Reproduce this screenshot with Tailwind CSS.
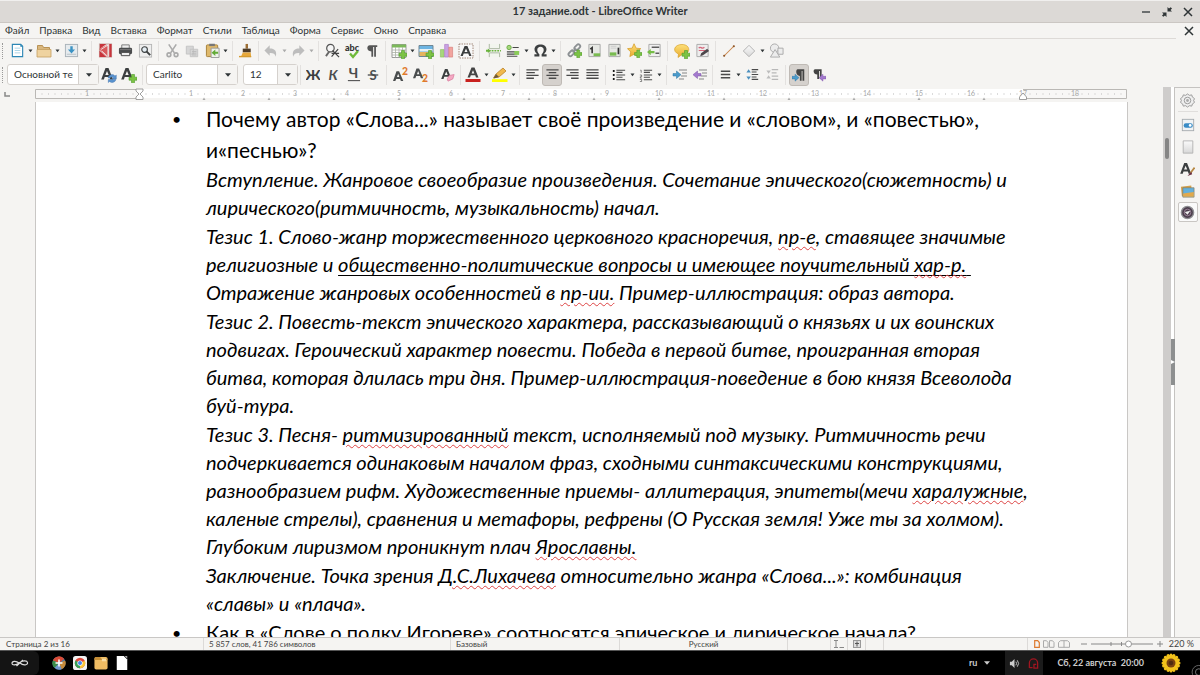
<!DOCTYPE html>
<html lang="ru">
<head>
<meta charset="utf-8">
<meta name="viewport" content="width=device-width, initial-scale=1">
<title>17 задание.odt - LibreOffice Writer</title>
<script src="https://cdn.jsdelivr.net/npm/@tailwindcss/browser@4"></script>
</head>
<body class="flex h-screen flex-col overflow-hidden bg-[#f5f4f2] font-['Lato','Open_Sans',sans-serif] text-[10px] text-[#2e3436]">

<svg class="absolute size-0" xmlns="http://www.w3.org/2000/svg">
  <defs>
    <linearGradient id="gold" x1="0" y1="0" x2="0" y2="1"><stop offset="0" stop-color="#fde07a"/><stop offset="1" stop-color="#e9ab2c"/></linearGradient>
    <linearGradient id="pale" x1="0" y1="0" x2="0" y2="1"><stop offset="0" stop-color="#fafafa"/><stop offset="1" stop-color="#d8d8d8"/></linearGradient>
  </defs>
  <symbol id="plus" viewBox="0 0 16 16"><path d="M10.500 7.500h3v2.700h2.500v3h-2.500v2.600h-3v-2.600H8v-3h2.500z" fill="#7cc344" stroke="#4e9a2c" stroke-width=".6"/></symbol>
  <symbol id="new" viewBox="0 0 16 16"><path d="M2.500 1.500h9l2 2v11h-11z" fill="#fff" stroke="#2d87b5" stroke-width="1.200"/><path d="M5 5.500h6M5 8h6M5 10.500h6" stroke="#a9d3e6"/><path d="M11 1l3 3h-3z" fill="#2d87b5"/></symbol>
  <symbol id="open" viewBox="0 0 16 16"><path d="M1.500 13.500v-11h5l1 2h6v3" fill="#d9b77e" stroke="#b89255"/><path d="M1 6.500h14v7.500H1z" fill="#efd3a0" stroke="#c49f60" stroke-width=".8"/></symbol>
  <symbol id="save" viewBox="0 0 16 16"><rect x="1.500" y="1.500" width="13" height="13" fill="#e6ebee" stroke="#a8b2b8"/><path d="M3 12h10" stroke="#b8c0c4"/><path d="M6.700 3.500h2.600V7h2.500L8 11.300 4.200 7h2.500z" fill="#3c93c4"/></symbol>
  <symbol id="pdf" viewBox="0 0 16 16"><rect x="1.500" y="1" width="13" height="14" fill="#e8d7d5" stroke="#c7a9a6"/><path d="M12 1h2.500v14H12zM2 1h7L2 6z" fill="#c7343b"/><path d="M1.500 6 10 2v13L1.500 7z" fill="#d85a5c"/><path d="M1.500 8L9 15H1.500z" fill="#c7343b"/><path d="M3 7l8-5M4 8.500l6 5.500" stroke="#fff" fill="none" stroke-width=".8"/></symbol>
  <symbol id="print" viewBox="0 0 16 16"><path d="M4 2h8v4H4z" fill="#eee" stroke="#777"/><rect x="1" y="5" width="14" height="7" rx="1.500" fill="#4a4c4d"/><path d="M2 7h12" stroke="#77797a"/><path d="M3.500 10h9v3.500h-9z" fill="#eee" stroke="#444"/></symbol>
  <symbol id="preview" viewBox="0 0 16 16"><rect x="1.500" y="1.500" width="13" height="13.500" fill="#eee" stroke="#b5b5b5"/><circle cx="7" cy="7" r="3" fill="#e5eef4" stroke="#3d4041" stroke-width="1.200"/><path d="M9 9l4 4" stroke="#3d4041" stroke-width="2"/></symbol>
  <symbol id="cut" viewBox="0 0 16 16"><g fill="none" stroke="#aaa" stroke-width="1.700"><path d="M4 1.500l6 9M12 1.500l-6 9"/><circle cx="4.200" cy="12.500" r="2"/><circle cx="11.800" cy="12.500" r="2"/></g></symbol>
  <symbol id="copy" viewBox="0 0 16 16"><path d="M1.500 2.500h8v9h-8zM6 6h8.500v8.500H6z" fill="#d6d6d6" stroke="#c2c2c2"/><path d="M8 8.500h5M8 10.500h5M8 12.500h5" stroke="#b8b8b8"/></symbol>
  <symbol id="paste" viewBox="0 0 16 16"><rect x="1.500" y="2" width="12" height="12.500" rx="1" fill="#dfb96b" stroke="#a57f36"/><rect x="4.500" y=".8" width="6" height="2.500" fill="#777"/><path d="M6.500 5.500h8.500v10H6.500z" fill="#eef2ea" stroke="#999"/><path d="M14 9.200h-3V7L7 10.500l4 3.300v-2.300h3z" fill="#63ab37"/></symbol>
  <symbol id="brush" viewBox="0 0 16 16"><path d="M7 1h2.600v5H7z" fill="#9c6d33"/><path d="M4 6h8.500v4H4z" fill="#4c3a26"/><path d="M4 10h8.500l.5 5H2z" fill="#e7a83b"/><path d="M0 14.500h13" stroke="#d49a2f" stroke-width="1.500"/></symbol>
  <symbol id="undo" viewBox="0 0 16 16"><path d="M6.500 1.500V5c6 0 8.500 3 7 9.500-1-3.500-3-4.500-7-4.300v3.300L.5 7.500z" fill="#bdbdbd"/></symbol>
  <symbol id="find" viewBox="0 0 16 16"><circle cx="5.800" cy="5.500" r="4" fill="#f5f5f5" stroke="#555" stroke-width="1.300"/><path d="M1 14l3.500-5" stroke="#666" stroke-width="2"/><path d="M7 14.500l7-8M8 8l7 7M7 11h8" stroke="#444" stroke-width="1.300"/></symbol>
  <symbol id="pilcrow" viewBox="0 0 16 16"><path d="M5.500 1.500H14v1.800h-1.500V14.500h-2V3.300H9.300v11.200h-2V8.500C1.500 8.500 1.500 1.500 5.500 1.500z" fill="#555"/></symbol>
  <symbol id="table" viewBox="0 0 16 16"><path d="M1 1.500h14v13H1z" fill="#fff" stroke="#9a9a9a"/><path d="M1 1.500h14v3H1z" fill="#7cb95a"/><path d="M1 7h14M1 9.500h14M1 12h14M4.500 4v10.500M8 4v10.500M11.500 4v10.500" stroke="#aab0a5" stroke-width=".8"/><use href="#plus"/></symbol>
  <symbol id="image" viewBox="0 0 16 16"><path d="M1 2.500h14v11H1z" fill="#6db4e2" stroke="#6f8795"/><path d="M1.500 6h13v2.500h-13z" fill="#e8f1f5"/><path d="M1.500 9h13v4h-13z" fill="#e5b460"/><use href="#plus"/></symbol>
  <symbol id="chart" viewBox="0 0 16 16"><path d="M1.500 7h4v8h-4z" fill="#a7d67c" stroke="#86b85c" stroke-width=".6"/><path d="M6 1.500h4V15H6z" fill="#c9a2e2" stroke="#a66fc2" stroke-width=".6"/><path d="M10.500 4.500h4V15h-4z" fill="#f2a49e" stroke="#d3746e" stroke-width=".6"/></symbol>
  <symbol id="textbox" viewBox="0 0 16 16"><rect x="1" y="1" width="14" height="14" fill="#f8f8f8" stroke="#8b6d5b" stroke-width=".8" stroke-dasharray="1.500 1"/><path d="M6.600 3h2.800L13.500 13h-2.300l-.9-2.500H5.700L4.800 13H2.500zM8 5.500L6.500 9h3z" fill="#3b3e3f"/></symbol>
  <symbol id="pagebreak" viewBox="0 0 16 16"><path d="M3.500 1v5h11V1M3.500 15v-4.500h11V15" fill="#f2f5ee" stroke="#a9b5a0"/><path d="M3 8.200h13" stroke="#69b33c" stroke-width="1.500" stroke-dasharray="2 1"/><path d="M0 7.200h2V5.800l3 2.400-3 2.400V9.200H0z" fill="#69b33c"/></symbol>
  <symbol id="field" viewBox="0 0 16 16"><circle cx="3.500" cy="4" r="2.500" fill="#a5d77c" stroke="#69a942"/><path d="M7.500 4h7M1 9h14M1 11.500h10M1 14h12" stroke="#484848" stroke-width="1.300"/><path d="M9.500 8h5.500v4.500H9.500z" fill="#8acb59"/></symbol>
  <symbol id="omega" viewBox="0 0 16 16"><path d="M1.500 14.500v-2.500h3C-1 7 2 1.500 8 1.500s9 5.500 3.500 10.500h3v2.500H9.200v-2.500C13 8 11.500 4 8 4S3 8 6.800 12v2.500z" fill="#3c3f40"/></symbol>
  <symbol id="link" viewBox="0 0 16 16"><g fill="none" stroke="#8d9194" stroke-width="2"><rect x="7.500" y="2.500" width="7" height="4" rx="2" transform="rotate(-45 11 4.500)"/><rect x="1.200" y="9" width="7" height="4" rx="2" transform="rotate(-45 4.700 11)"/><path d="M6 10l4-4"/></g><use href="#plus"/></symbol>
  <symbol id="footnote" viewBox="0 0 16 16"><path d="M2 1.500h12v13H2z" fill="#e6e8e4" stroke="#a8a8a8"/><path d="M3.500 6.500l2-1.500v6" fill="none" stroke="#333" stroke-width="1.700"/><path d="M7 11h7v3H7z" fill="#79bb50"/></symbol>
  <symbol id="endnote" viewBox="0 0 16 16"><path d="M2 1.500h12v13H2z" fill="#e6e8e4" stroke="#a8a8a8"/><path d="M12.200 5v7" stroke="#333" stroke-width="1.800"/><path d="M4 3.500h6M4 5.500h6" stroke="#ccc"/><path d="M3 10h7v3.500H3z" fill="#79bb50"/></symbol>
  <symbol id="bookmark" viewBox="0 0 16 16"><path d="M7.500.8l2.200 4.700 5 .5-3.800 3.500 1 5-4.400-2.500L3 14.500l1-5L.5 6l5-.5z" fill="url(#gold)" stroke="#d79b22" stroke-width=".8"/><use href="#plus"/></symbol>
  <symbol id="crossref" viewBox="0 0 16 16"><path d="M2 1.500h12v13H2z" fill="#f0f0f0" stroke="#a8a8a8"/><path d="M5 4.500h8M9 11h4" stroke="#5c5c5c" stroke-width="1.500"/><path d="M0 9.500l4-3v2h4v2.500H4v2z" fill="#75bd46"/></symbol>
  <symbol id="comment" viewBox="0 0 16 16"><path d="M8 1.500c9 0 9 10 0 10l-4 3 .5-3.500C-2 8.500 0 1.500 8 1.500z" fill="url(#gold)" stroke="#d9a22b" stroke-width=".7"/><use href="#plus"/></symbol>
  <symbol id="track" viewBox="0 0 16 16"><path d="M2 1.500h12v13H2z" fill="#ededed" stroke="#aaa"/><path d="M4 5.500c2-3 3 2 6-1M4 8h7" stroke="#d6687b" fill="none" stroke-width="1.300"/><path d="M5.500 14l1-3L13 6l2 2.500-6.500 4.500z" fill="#4d474b"/></symbol>
  <symbol id="line" viewBox="0 0 16 16"><path d="M2 14L14 2" stroke="#c98348" stroke-width="1.200"/><circle cx="2.500" cy="13.500" r="1.200" fill="#8d5426"/><circle cx="13.500" cy="2.500" r="1.200" fill="#8d5426"/></symbol>
  <symbol id="diamond" viewBox="0 0 16 16"><path d="M8 1.500L14.500 8 8 14.500 1.500 8z" fill="url(#pale)" stroke="#aaa"/></symbol>
  <symbol id="shapes" viewBox="0 0 16 16"><g fill="#ececec" stroke="#aaa"><circle cx="6" cy="5.500" r="4.500"/><path d="M9.500 5.500H15v6.500H9.500z"/><path d="M6.500 7l5 8h-10z"/></g></symbol>
  <symbol id="bigA" viewBox="0 0 16 16"><path d="M4.500 1h3L12 12.500H9.200L8.400 10H3.700l-.8 2.500H.2zM6 4L4.300 8h3.400z" fill="#3c3f40"/></symbol>
  <symbol id="styleupd" viewBox="0 0 16 16"><use href="#bigA"/><path d="M7 11a4 4 0 0 1 7-2l1.300-1v4h-4l1.200-1.200A2.500 2.500 0 0 0 9 11zM15 12.500a4 4 0 0 1-6.500 2L7.300 15.500V12.500z" fill="#5a93cf" stroke="#346ba7" stroke-width=".4"/></symbol>
  <symbol id="stylenew" viewBox="0 0 16 16"><use href="#bigA"/><use href="#plus"/></symbol>
  <symbol id="clearfmt" viewBox="0 0 16 16"><use href="#bigA"/><path d="M9.500 8.500l5.500-1-1.500 5-5.500 2.500-1-2.500z" fill="#f5a9c3" stroke="#d77a9c" stroke-width=".8"/></symbol>
  <symbol id="fontcolor" viewBox="0 0 16 16"><path d="M6.500.5h3L13.500 10.500H11L10.200 8.300H5.800L5 10.500H2.500zM8 3.200L6.600 6.500h2.800z" fill="#444"/><path d="M.5 12h15v3H.5z" fill="#c9211e"/></symbol>
  <symbol id="hilite" viewBox="0 0 16 16"><path d="M0 12.200h15.500V15H0z" fill="#ff0"/><path d="M1.500 11l2.500-4 7-6 3 3-7 6z" fill="#f0b94e" stroke="#bb8127" stroke-width=".8"/><path d="M1.500 11.500L4 7l3 3z" fill="#6c5a3b"/></symbol>
  <symbol id="left" viewBox="0 0 16 16"><path d="M1.500 3h13M1.500 6h9M1.500 9h13M1.500 12h8" stroke="#4a4a4a" stroke-width="1.400"/></symbol>
  <symbol id="center" viewBox="0 0 16 16"><path d="M1.500 3h13M4 6h8M1.500 9h13M4 12h8" stroke="#4a4a4a" stroke-width="1.400"/></symbol>
  <symbol id="right" viewBox="0 0 16 16"><path d="M1.500 3h13M5.500 6h9M1.500 9h13M6.500 12h8" stroke="#4a4a4a" stroke-width="1.400"/></symbol>
  <symbol id="justify" viewBox="0 0 16 16"><path d="M1.500 3h13M1.500 6h13M1.500 9h13M1.500 12h13" stroke="#4a4a4a" stroke-width="1.400"/></symbol>
  <symbol id="bullets" viewBox="0 0 16 16"><path d="M5 2.500h10M5 5h7M5 8h10M5 10.500h7M5 13.500h10" stroke="#4a4a4a" stroke-width="1.200"/><circle cx="2" cy="3.500" r="1.200"/><circle cx="2" cy="8" r="1.200"/><circle cx="2" cy="12.500" r="1.200"/></symbol>
  <symbol id="numbers" viewBox="0 0 16 16"><path d="M5.500 2.500H15M5.500 5h7M5.500 8H15M5.500 10.500h7M5.500 13.500H15" stroke="#4a4a4a" stroke-width="1.200"/><path d="M1.500 2.500h1v3M1 8h2v2H1.500v1.500H3M1 13h2v2.500H1" fill="none" stroke="#555" stroke-width=".8"/></symbol>
  <symbol id="indent" viewBox="0 0 16 16"><path d="M7 3h8M10 6h5M9 9h6M7 12h5" stroke="#858585" stroke-width="1.200"/><path d="M1 6.500h3.500V4L9 7.700l-4.500 3.800V9H1z" fill="#4b9bcb" stroke="#2b76a5" stroke-width=".5"/></symbol>
  <symbol id="outdent" viewBox="0 0 16 16"><path d="M7 3h8M10 6h5M9 9h6M7 12h5" stroke="#858585" stroke-width="1.200"/><path d="M9 6.500H5.500V4L1 7.700l4.500 3.800V9H9z" fill="#a379ce" stroke="#7e52ab" stroke-width=".5"/></symbol>
  <symbol id="spacing" viewBox="0 0 16 16"><path d="M3 4.500h10M3 8h10M3 11.500h10" stroke="#4a4a4a" stroke-width="1.700"/></symbol>
  <symbol id="paraup" viewBox="0 0 16 16"><path d="M7 2h8M7 5h6M7 8h8M7 11h6M7 14h8" stroke="#4a4a4a" stroke-width="1.300"/><path d="M3.200 1.500L6 5.500H.5zM3.200 14.500L6 10.500H.5z" fill="#4b8fbd"/></symbol>
  <symbol id="paradown" viewBox="0 0 16 16"><path d="M7 2h8M7 6h6M7 10h8M7 14h8" stroke="#b8b8b8" stroke-width="1.300"/><path d="M3.200 7L6 3H.5zM3.200 9L6 13H.5z" fill="#bdbdbd"/></symbol>
  <symbol id="ltr" viewBox="0 0 16 16"><path d="M6.500 1.500H14v13h-2V3.500h-1v11H9V9C4 9 4 1.500 6.500 1.500z" fill="#444"/><path d="M0 9.500h3.500V7L8 11l-4.500 4v-2.500H0z" fill="#4b9bcb" stroke="#2b76a5" stroke-width=".5"/></symbol>
  <symbol id="rtl" viewBox="0 0 16 16"><path d="M3.500 1.500H11v11H9V3.500H8v9H6V7.500C1 7.500 1 1.500 3.500 1.500z" fill="#444"/><path d="M16 9.500h-3.500V7L8 11l4.500 4v-2.500H16z" fill="#a379ce" stroke="#7e52ab" stroke-width=".5"/></symbol>
  <symbol id="tri" viewBox="0 0 7 16"><path d="M1.500 6.500h4L3.500 9.200z" fill="currentColor"/></symbol>
  <symbol id="drop" viewBox="0 0 8 8"><path d="M1 2.200h6L4 5.800z" fill="currentColor"/></symbol>
</svg>

<header class="relative flex h-[23px] shrink-0 items-center border-t border-b border-t-[#f0efee] border-b-[#cbc7c3] bg-[#dcd9d6]">
  <h1 class="flex-1 text-center text-[11px] font-bold">17 задание.odt - LibreOffice Writer</h1>
  <div class="absolute right-[2px] flex gap-px text-[#2e3436]">
    <button aria-label="Свернуть" class="flex h-4 w-5 items-center justify-center"><svg class="size-3" viewBox="0 0 12 12"><path d="M2 6h8" stroke="currentColor" stroke-width="1.300"/></svg></button>
    <button aria-label="Восстановить" class="flex h-4 w-5 items-center justify-center"><svg class="size-3" viewBox="0 0 12 12"><path d="M6.500 1v4.500H11L9.500 4 11 2.500 9.700 1.200 8 2.600zM5.500 11V6.500H1L2.500 8 1 9.500l1.300 1.300L4 9.400z" fill="currentColor"/></svg></button>
    <button aria-label="Закрыть" class="flex h-4 w-5 items-center justify-center"><svg class="size-3" viewBox="0 0 12 12"><path d="M2 2l8 8M10 2l-8 8" stroke="currentColor" stroke-width="1.500"/></svg></button>
  </div>
</header>

<nav class="flex h-[15px] shrink-0 items-center justify-between pr-[5px] pl-[5px]">
  <div class="flex gap-[10px]">
    <button>Файл</button><button>Правка</button><button>Вид</button><button>Вставка</button><button>Формат</button><button>Стили</button><button>Таблица</button><button>Форма</button><button>Сервис</button><button>Окно</button><button>Справка</button>
  </div>
  <button aria-label="Закрыть документ"><svg class="size-3" viewBox="0 0 12 12"><path d="M2 2l8 8M10 2l-8 8" stroke="currentColor" stroke-width="1.500"/></svg></button>
</nav>

<div role="toolbar" aria-label="Стандартная" class="mr-6 flex h-6 shrink-0 items-center border-t border-[#dddad7]">
  <i class="mr-1 ml-[2px] h-4 w-px border-l border-dotted border-[#999]"></i>
  <button aria-label="Создать" class="flex w-5 justify-center"><svg class="size-[15px]"><use href="#new"/></svg></button><button aria-label="Создать: варианты"><svg class="h-4 w-[7px]"><use href="#tri"/></svg></button>
  <button aria-label="Открыть" class="flex w-5 justify-center"><svg class="size-4"><use href="#open"/></svg></button><button aria-label="Недавние"><svg class="h-4 w-[7px]"><use href="#tri"/></svg></button>
  <button aria-label="Сохранить" class="flex w-5 justify-center"><svg class="size-[15px]"><use href="#save"/></svg></button><button aria-label="Сохранить: варианты"><svg class="h-4 w-[7px]"><use href="#tri"/></svg></button>
  <i class="mx-[3px] h-5 w-px bg-[#e3e1df]"></i>
  <button aria-label="Экспорт в PDF" class="flex w-5 justify-center"><svg class="size-[15px]"><use href="#pdf"/></svg></button>
  <button aria-label="Печать" class="flex w-5 justify-center"><svg class="size-[15px]"><use href="#print"/></svg></button>
  <button aria-label="Предпросмотр" class="flex w-5 justify-center"><svg class="size-[15px]"><use href="#preview"/></svg></button>
  <i class="mx-[3px] h-5 w-px bg-[#e3e1df]"></i>
  <button aria-label="Вырезать" class="flex w-5 justify-center"><svg class="size-[15px]"><use href="#cut"/></svg></button>
  <button aria-label="Копировать" class="flex w-5 justify-center"><svg class="size-[14px]"><use href="#copy"/></svg></button>
  <button aria-label="Вставить" class="flex w-5 justify-center"><svg class="size-[15px]"><use href="#paste"/></svg></button><button aria-label="Вставить: варианты"><svg class="h-4 w-[7px]"><use href="#tri"/></svg></button>
  <i class="mx-[3px] h-5 w-px bg-[#e3e1df]"></i>
  <button aria-label="Клонировать" class="flex w-5 justify-center"><svg class="size-[15px]"><use href="#brush"/></svg></button>
  <i class="mx-[2px] h-5 w-px bg-[#e3e1df]"></i>
  <button aria-label="Отменить" class="flex w-5 justify-center"><svg class="size-[14px]"><use href="#undo"/></svg></button><button aria-label="Отменить: список" class="text-[#aaa]"><svg class="h-4 w-[7px]"><use href="#tri"/></svg></button>
  <button aria-label="Вернуть" class="flex w-5 justify-center"><svg class="size-[14px] -scale-x-100"><use href="#undo"/></svg></button><button aria-label="Вернуть: список" class="text-[#aaa]"><svg class="h-4 w-[7px]"><use href="#tri"/></svg></button>
  <i class="mx-[3px] h-5 w-px bg-[#e3e1df]"></i>
  <button aria-label="Найти и заменить" class="flex w-5 justify-center"><svg class="size-[15px]"><use href="#find"/></svg></button>
  <button aria-label="Орфография" class="flex w-5 justify-center"><svg class="size-4" viewBox="0 0 16 16"><text x="8" y="8" font-size="9" font-weight="900" text-anchor="middle" fill="#333">abc</text><path d="M6 10.500l3 3.500 5-6" fill="none" stroke="#6fba3a" stroke-width="2.400"/></svg></button>
  <button aria-label="Непечатаемые символы" class="flex w-5 justify-center"><svg class="size-[14px]"><use href="#pilcrow"/></svg></button>
  <i class="mx-[3px] h-5 w-px bg-[#e3e1df]"></i>
  <button aria-label="Таблица" class="flex w-5 justify-center"><svg class="size-4"><use href="#table"/></svg></button><button aria-label="Таблица: размер"><svg class="h-4 w-[7px]"><use href="#tri"/></svg></button>
  <button aria-label="Изображение" class="flex w-5 justify-center"><svg class="size-4"><use href="#image"/></svg></button>
  <button aria-label="Диаграмма" class="flex w-5 justify-center"><svg class="size-[15px]"><use href="#chart"/></svg></button>
  <button aria-label="Текстовый блок" class="flex w-5 justify-center"><svg class="size-4"><use href="#textbox"/></svg></button>
  <i class="mx-[3px] h-5 w-px bg-[#e3e1df]"></i>
  <button aria-label="Разрыв страницы" class="flex w-5 justify-center"><svg class="size-[15px]"><use href="#pagebreak"/></svg></button>
  <button aria-label="Поле" class="flex w-5 justify-center"><svg class="size-[14px]"><use href="#field"/></svg></button><button aria-label="Поле: варианты"><svg class="h-4 w-[7px]"><use href="#tri"/></svg></button>
  <button aria-label="Специальный символ" class="flex w-5 justify-center"><svg class="size-[15px]"><use href="#omega"/></svg></button><button aria-label="Символы"><svg class="h-4 w-[7px]"><use href="#tri"/></svg></button>
  <i class="mx-[3px] h-5 w-px bg-[#e3e1df]"></i>
  <button aria-label="Гиперссылка" class="flex w-5 justify-center"><svg class="size-[15px]"><use href="#link"/></svg></button>
  <button aria-label="Сноска" class="flex w-5 justify-center"><svg class="size-[15px]"><use href="#footnote"/></svg></button>
  <button aria-label="Концевая сноска" class="flex w-5 justify-center"><svg class="size-[15px]"><use href="#endnote"/></svg></button>
  <button aria-label="Закладка" class="flex w-5 justify-center"><svg class="size-[15px]"><use href="#bookmark"/></svg></button>
  <button aria-label="Перекрёстная ссылка" class="flex w-5 justify-center"><svg class="size-[15px]"><use href="#crossref"/></svg></button>
  <i class="mr-1 ml-[3px] h-5 w-px bg-[#e3e1df]"></i>
  <button aria-label="Комментарий" class="flex w-5 justify-center"><svg class="size-4"><use href="#comment"/></svg></button>
  <button aria-label="Исправления" class="flex w-5 justify-center"><svg class="size-[15px]"><use href="#track"/></svg></button>
  <i class="mx-[3px] h-5 w-px bg-[#e3e1df]"></i>
  <button aria-label="Линия" class="flex w-5 justify-center"><svg class="size-[14px]"><use href="#line"/></svg></button>
  <button aria-label="Фигуры" class="flex w-5 justify-center"><svg class="size-[14px]"><use href="#diamond"/></svg></button><button aria-label="Фигуры: варианты"><svg class="h-4 w-[7px]"><use href="#tri"/></svg></button>
  <button aria-label="Рисование" class="flex w-5 justify-center"><svg class="size-[15px]"><use href="#shapes"/></svg></button>
</div>

<div role="toolbar" aria-label="Форматирование" class="flex h-[25px] shrink-0 items-center">
  <i class="mr-1 ml-[2px] h-4 w-px border-l border-dotted border-[#999]"></i>
  <div class="relative h-[21px] w-[92px]">
    <select aria-label="Стиль абзаца" class="h-full w-full appearance-none overflow-hidden rounded-[3px] border border-[#d5d1cd] bg-white pr-[25px] pl-[6px]"><option>Основной текст</option></select>
    <span class="pointer-events-none absolute inset-y-px right-px flex w-5 items-center justify-center border-l border-[#d5d1cd] bg-[#f5f4f2]"><svg class="size-2"><use href="#drop"/></svg></span>
  </div>
  <button aria-label="Обновить стиль" class="flex w-5 justify-center"><svg class="size-4"><use href="#styleupd"/></svg></button>
  <button aria-label="Создать стиль" class="flex w-5 justify-center"><svg class="size-4"><use href="#stylenew"/></svg></button>
  <i class="mx-[3px] h-5 w-px bg-[#e3e1df]"></i>
  <div class="relative h-[21px] w-[92px]">
    <select aria-label="Шрифт" class="h-full w-full appearance-none rounded-[3px] border border-[#d5d1cd] bg-white pr-[25px] pl-[6px]"><option>Carlito</option></select>
    <span class="pointer-events-none absolute inset-y-px right-px flex w-5 items-center justify-center border-l border-[#d5d1cd] bg-[#f5f4f2]"><svg class="size-2"><use href="#drop"/></svg></span>
  </div>
  <div class="relative ml-[5px] h-[21px] w-[55px]">
    <select aria-label="Размер шрифта" class="h-full w-full appearance-none rounded-[3px] border border-[#d5d1cd] bg-white pr-6 pl-[6px]"><option>12</option></select>
    <span class="pointer-events-none absolute inset-y-px right-px flex w-5 items-center justify-center border-l border-[#d5d1cd] bg-[#f5f4f2]"><svg class="size-2"><use href="#drop"/></svg></span>
  </div>
  <i class="mx-[2px] h-5 w-px bg-[#e3e1df]"></i>
  <button aria-label="Полужирный" class="flex w-5 justify-center"><svg class="size-[14px]" viewBox="0 0 16 16"><text x="8" y="13.500" font-size="16" font-weight="900" text-anchor="middle" fill="#3c3f40">Ж</text></svg></button>
  <button aria-label="Курсив" class="flex w-5 justify-center"><svg class="size-[14px]" viewBox="0 0 16 16"><text x="8" y="13.500" font-size="16" font-style="italic" font-weight="700" text-anchor="middle" fill="#4a4d4e">К</text></svg></button>
  <button aria-label="Подчёркнутый" class="flex w-5 justify-center"><svg class="size-[15px]" viewBox="0 0 16 16"><text x="8" y="12" font-size="15" font-weight="700" text-anchor="middle" fill="#4a4d4e">Ч</text><path d="M2 14.500h13" stroke="#555" stroke-width="1.200"/></svg></button>
  <button aria-label="Зачёркнутый" class="flex w-5 justify-center"><svg class="size-[14px]" viewBox="0 0 16 16"><text x="8" y="13.500" font-size="15" font-weight="700" text-anchor="middle" fill="#4a4d4e">S</text><path d="M2 8h12" stroke="#4a4d4e" stroke-width="1.500"/></svg></button>
  <i class="mx-[3px] h-5 w-px bg-[#e3e1df]"></i>
  <button aria-label="Верхний индекс" class="flex w-5 justify-center"><svg class="size-[15px]" viewBox="0 0 16 16"><path d="M3.700 4.500h2.800L11 15H8.400l-.9-2.300H3.400L2.500 15H0zM5.500 7.200L4.200 10.700h2.600z" fill="#4a4d4e"/><text x="9.500" y="8" font-size="11" font-weight="900" fill="#e07a2c">2</text></svg></button>
  <button aria-label="Нижний индекс" class="flex w-5 justify-center"><svg class="size-[15px]" viewBox="0 0 16 16"><path d="M3.700 1.500h2.800L11 12H8.400l-.9-2.300H3.400L2.500 12H0zM5.500 4.200L4.200 7.700h2.600z" fill="#4a4d4e"/><text x="9.500" y="15.500" font-size="11" font-weight="900" fill="#e07a2c">2</text></svg></button>
  <i class="mr-1 ml-[3px] h-5 w-px bg-[#e3e1df]"></i>
  <button aria-label="Очистить форматирование" class="flex w-5 justify-center"><svg class="size-[14px]"><use href="#clearfmt"/></svg></button>
  <i class="mx-[2px] h-5 w-px bg-[#e3e1df]"></i>
  <button aria-label="Цвет шрифта" class="flex w-5 justify-center"><svg class="size-4"><use href="#fontcolor"/></svg></button><button aria-label="Выбор цвета шрифта"><svg class="h-4 w-[7px]"><use href="#tri"/></svg></button>
  <button aria-label="Цвет выделения" class="flex w-5 justify-center"><svg class="size-4"><use href="#hilite"/></svg></button><button aria-label="Выбор цвета выделения"><svg class="h-4 w-[7px]"><use href="#tri"/></svg></button>
  <i class="mx-[2px] h-5 w-px bg-[#e3e1df]"></i>
  <button aria-label="По левому краю" class="flex w-5 justify-center"><svg class="size-[15px]"><use href="#left"/></svg></button>
  <button aria-label="По центру" aria-pressed="true" class="flex h-[22px] w-5 items-center justify-center rounded-[3px] border border-[#bfbab5] bg-[#d5d1cd]"><svg class="size-[15px] shrink-0"><use href="#center"/></svg></button>
  <button aria-label="По правому краю" class="flex w-5 justify-center"><svg class="size-[15px]"><use href="#right"/></svg></button>
  <button aria-label="По ширине" class="flex w-5 justify-center"><svg class="size-[15px]"><use href="#justify"/></svg></button>
  <i class="mx-[3px] h-5 w-px bg-[#e3e1df]"></i>
  <button aria-label="Маркированный список" class="flex w-5 justify-center"><svg class="size-[14px]"><use href="#bullets"/></svg></button><button aria-label="Маркеры"><svg class="h-4 w-[7px]"><use href="#tri"/></svg></button>
  <button aria-label="Нумерованный список" class="flex w-5 justify-center"><svg class="size-[14px]"><use href="#numbers"/></svg></button><button aria-label="Нумерация"><svg class="h-4 w-[7px]"><use href="#tri"/></svg></button>
  <i class="mx-[3px] h-5 w-px bg-[#e3e1df]"></i>
  <button aria-label="Увеличить отступ" class="flex w-5 justify-center"><svg class="size-4"><use href="#indent"/></svg></button>
  <button aria-label="Уменьшить отступ" class="flex w-5 justify-center"><svg class="size-4"><use href="#outdent"/></svg></button>
  <i class="mx-[2px] h-5 w-px bg-[#e3e1df]"></i>
  <button aria-label="Межстрочный интервал" class="flex w-5 justify-center"><svg class="size-[15px]"><use href="#spacing"/></svg></button><button aria-label="Выбор интервала"><svg class="h-4 w-[7px]"><use href="#tri"/></svg></button>
  <button aria-label="Увеличить интервал" class="flex w-5 justify-center"><svg class="size-[13px]"><use href="#paraup"/></svg></button>
  <button aria-label="Уменьшить интервал" class="flex w-5 justify-center"><svg class="size-[13px]"><use href="#paradown"/></svg></button>
  <i class="mx-[3px] h-5 w-px bg-[#e3e1df]"></i>
  <button aria-label="Слева направо" aria-pressed="true" class="flex h-[22px] w-5 items-center justify-center rounded-[3px] border border-[#bfbab5] bg-[#d5d1cd]"><svg class="size-[14px] shrink-0"><use href="#ltr"/></svg></button>
  <button aria-label="Справа налево" class="flex w-5 justify-center"><svg class="size-[14px]"><use href="#rtl"/></svg></button>
</div>

<main class="flex min-h-0 flex-1">
  <div class="flex min-w-0 flex-1 flex-col">
    <div class="relative flex h-[15px] shrink-0 justify-center pt-px">
      <svg class="absolute top-[5px] left-1 size-[6px]" viewBox="0 0 6 6"><path d="M1 0v4h5" fill="none" stroke="#888" stroke-width="1.500"/></svg>
      <svg id="ruler" class="h-[14px] w-[1093px] shrink-0" viewBox="0 0 1093 14" font-size="7" fill="#aaa" text-anchor="middle">
        <rect x="104" y="1" width="884" height="9" fill="#fff"/>
        <path d="M104 1.500H.5v9H104M988 1.500h103.500v9H988" fill="#f8f7f6" stroke="#bab8b5"/>
        <path d="M6.500 6H1090" stroke="#d0d0d0" stroke-width="1.500" stroke-dasharray="1 5.500"/>
        <g id="marks"></g>
        <path d="M101 1h7v2l-3 3 3 3v2.500h-7V9l3-3-3-3zM988 5l3.500 4v2.500h-7V9z" fill="#fff" stroke="#888" stroke-width=".8"/>
      </svg>
    </div>
    <div class="flex min-h-0 flex-1 justify-center overflow-hidden">
      <article class="h-full w-[1093px] shrink-0 overflow-hidden border-x border-[#c9c7c5] bg-white pt-px pl-[136px] whitespace-nowrap text-black">
        <ul class="text-[21px] leading-[31px]">
          <li class="flex"><span class="w-[34px] shrink-0 text-[16px]">•</span><p>Почему автор «Слова...» называет своё произведение и «словом», и «повестью»,<br>и«песнью»?</p></li>
        </ul>
        <div class="ml-[34px] flex flex-col gap-px text-[20px] leading-[28px] italic">
          <p>Вступление. Жанровое своеобразие произведения. Сочетание эпического(сюжетность) и<br>лирического(ритмичность, музыкальность) начал.</p>
          <p>Тезис 1. Слово-жанр торжественного церковного красноречия, <span class="underline decoration-[#d44] decoration-wavy decoration-1 underline-offset-2">пр-е</span>, ставящее значимые<br>религиозные и <u class="decoration-1 underline-offset-[3px] [text-decoration-skip-ink:none]">общественно-политические вопросы и имеющее поучительный <span class="underline decoration-[#d44] decoration-wavy decoration-1 underline-offset-2">хар-р.</span>&nbsp;</u><br>Отражение жанровых особенностей в <span class="underline decoration-[#d44] decoration-wavy decoration-1 underline-offset-2">пр-ии.</span> Пример-иллюстрация: образ автора.</p>
          <p>Тезис 2. Повесть-текст эпического характера, рассказывающий о князьях и их воинских<br>подвигах. Героический характер повести. Победа в первой битве, проигранная вторая<br>битва, которая длилась три дня. Пример-иллюстрация-поведение в бою князя Всеволода<br>буй-тура.</p>
          <p>Тезис 3. Песня- <span class="underline decoration-[#d44] decoration-wavy decoration-1 underline-offset-2">ритмизированный</span> текст, исполняемый под музыку. Ритмичность речи<br>подчеркивается одинаковым началом фраз, сходными синтаксическими конструкциями,<br>разнообразием рифм. Художественные приемы- аллитерация, эпитеты(мечи <span class="underline decoration-[#d44] decoration-wavy decoration-1 underline-offset-2">харалужные</span>,<br>каленые стрелы), сравнения и метафоры, рефрены (О Русская земля! Уже ты за холмом).<br>Глубоким лиризмом проникнут плач <span class="underline decoration-[#d44] decoration-wavy decoration-1 underline-offset-2">Ярославны.</span></p>
          <p>Заключение. Точка зрения <span class="underline decoration-[#d44] decoration-wavy decoration-1 underline-offset-2">Д.С.Лихачева</span> относительно жанра «Слова...»: комбинация<br>«славы» и «плача».</p>
        </div>
        <ul class="text-[20px] leading-[31px]">
          <li class="flex"><span class="w-[34px] shrink-0 text-[16px]">•</span><p>Как в «Слове о полку Игореве» соотносятся эпическое и лирическое начала?</p></li>
        </ul>
      </article>
    </div>
  </div>
  <div class="w-2 shrink-0 bg-[#cecccb] pt-[51px]"><div class="mx-auto h-[21px] w-1 rounded-xs bg-[#858585]"></div></div>
  <div class="flex w-1 shrink-0 items-center border-r border-[#c5c3c1] bg-white"><button aria-label="Скрыть панель" class="flex h-[46px] w-1 items-center bg-[#8d8f90]"><svg class="size-1" viewBox="0 0 4 4"><path d="M0 0l4 2-4 2z" fill="#fff"/></svg></button></div>
  <aside class="flex w-[25px] shrink-0 flex-col items-center border-t border-[#c5c3c1] pt-[1px]">
    <button aria-label="Настройки боковой панели" class="flex h-[22px] w-5 items-center justify-center"><svg class="size-[15px]" viewBox="0 0 16 16"><path d="M8 1l2 1.500 2.500-.5.700 2.300L15.500 6l-1 2 1 2-2.300 1.700-.7 2.300-2.500-.5L8 15l-2-1.500-2.500.5-.7-2.300L.5 10l1-2-1-2 2.300-1.700L3.500 2l2.500.5z" fill="#eee" stroke="#999"/><circle cx="8" cy="8" r="3.500" fill="none" stroke="#999"/><circle cx="8" cy="8" r="1.500" fill="#aaa"/></svg></button>
    <i class="mb-[2px] h-px w-5 bg-[#e0dedc]"></i>
    <button aria-label="Свойства" class="flex h-[22px] w-5 items-center justify-center"><svg class="size-[14px]" viewBox="0 0 16 16"><rect x="1.500" y="1.500" width="13" height="13" fill="#f0f3f5" stroke="#a3a9ad"/><rect x="3" y="6" width="10.500" height="5" rx="2.500" fill="#3a8cc6"/><circle cx="10.500" cy="8.500" r="1.600" fill="#fff"/></svg></button>
    <button aria-label="Страница" class="flex h-[22px] w-5 items-center justify-center"><svg class="size-[14px]" viewBox="0 0 16 16"><path d="M2.500 1h11v14h-11z" fill="url(#pale)" stroke="#b0b0b0"/></svg></button>
    <button aria-label="Стили" class="flex h-[22px] w-5 items-center justify-center"><svg class="size-[15px]" viewBox="0 0 16 16"><use href="#bigA"/><path d="M15.500 6L11 12" stroke="#b88945" stroke-width="1.800"/><path d="M12 10.500L8 15l5-2z" fill="#6b3040"/></svg></button>
    <button aria-label="Галерея" class="flex h-[22px] w-5 items-center justify-center"><svg class="size-[15px]" viewBox="0 0 16 16"><path d="M1 3l11-1.500L13 12 2 13z" fill="#d3a04b"/><path d="M3 4h12v10H3z" fill="#63b0dd" stroke="#87795c" stroke-width=".7"/><path d="M3.300 10l11.400-1.500v5.200H3.300z" fill="#e2a94c"/></svg></button>
    <button aria-label="Навигатор" class="flex h-5 w-5 items-center justify-center rounded-[2px] border border-[#c9c6c3] bg-[#fafafa]"><svg class="size-[15px] shrink-0" viewBox="0 0 16 16"><circle cx="8" cy="8" r="6.500" fill="#4c3e4d" stroke="#8f8f93" stroke-width="1.500"/><circle cx="8" cy="8" r="3.500" fill="none" stroke="#9b8499"/><path d="M5 7.500l6-1.500-3 4.500z" fill="#eee"/></svg></button>
  </aside>
</main>

<footer class="flex h-[13px] shrink-0 items-center border-t border-[#c9c7c5] text-[8px] leading-[12px] whitespace-nowrap text-[#444]">
  <span class="w-[203px] pl-[6px]">Страница 2 из 16</span>
  <span class="w-[247px] border-l border-[#dcdad8] pl-[5px]">5 857 слов, 41 786 символов</span>
  <span class="w-[169px] border-l border-[#dcdad8] pl-[5px]">Базовый</span>
  <span class="w-[168px] border-l border-[#dcdad8] text-center">Русский</span>
  <span class="h-3 w-[43px] border-l border-[#dcdad8]"></span>
  <span class="flex h-3 w-[18px] items-center justify-center border-x border-[#dcdad8]"><svg class="h-2 w-[10px]" viewBox="0 0 10 8"><path d="M0 .5h4M2 .5v7M0 7.500h4M5.500 7.500H10" stroke="#888" fill="none"/></svg></span>
  <span class="flex h-3 w-[18px] items-center justify-center border-r border-[#dcdad8]"><svg class="size-2" viewBox="0 0 8 8"><rect x=".5" y=".5" width="7" height="7" fill="#ddd" stroke="#999"/><path d="M4 1.500v5M2 3.500h4" stroke="#555"/></svg></span>
  <span class="h-3 w-[18px] border-r border-[#dcdad8]"></span>
  <span class="h-3 flex-1"></span>
  <span class="flex h-3 items-center gap-[3px] border-l border-[#dcdad8] pl-[6px]">
    <button aria-label="Одна страница"><svg class="h-2 w-[6px]" viewBox="0 0 6 8"><path d="M.7.700h3L5.300 2.500v4.800H.7z" fill="none" stroke="#dd7a2f" stroke-width="1.200"/></svg></button>
    <button aria-label="Несколько страниц"><svg class="h-2 w-3" viewBox="0 0 12 8"><path d="M.5.700h3L5 2.500v4.800H.5zM6.500.700h3L11 2.500v4.800H6.500z" fill="none" stroke="#aaa"/></svg></button>
    <button aria-label="Книга"><svg class="h-2 w-3" viewBox="0 0 12 8"><path d="M6 .7H2.500L.5 2.500v4.800h11V2.500L9.500.7zM6 .7v6.600" fill="none" stroke="#aaa"/></svg></button>
  </span>
  <span class="ml-[11px] flex items-center gap-1">
    <button aria-label="Уменьшить масштаб"><svg class="h-2 w-[6px]" viewBox="0 0 6 8"><path d="M0 4h6" stroke="#888"/></svg></button>
    <svg role="img" aria-label="Масштаб" class="h-2 w-[62px]" viewBox="0 0 62 8"><path d="M0 4h62M20 2v4M30.500 2v4" stroke="#888"/><circle cx="37.500" cy="4" r="3" fill="#fff" stroke="#999"/></svg>
    <button aria-label="Увеличить масштаб"><svg class="h-2 w-[6px]" viewBox="0 0 6 8"><path d="M0 4h6M3 1v6" stroke="#888"/></svg></button>
  </span>
  <span class="w-[37px] pr-[6px] text-right text-[9px]">220 %</span>
</footer>

<div class="flex h-[25px] shrink-0 items-center border-t border-[#555] bg-black text-[9px] font-bold text-[#ccc]">
  <button aria-label="Меню приложений" class="flex h-full w-[39px] items-center justify-center rounded-r-md bg-[#141414]"><svg class="h-2 w-[18px]" viewBox="0 0 18 8"><path d="M5.500 7L12 1M8 4C5 1.500 1 2 1 4.300s4 2.200 7-.3 8-3 8.500-.5-4 3.500-7.500.5" fill="none" stroke="#ddd" stroke-width="1.200"/></svg></button>
  <div class="ml-[13px] flex items-center gap-[7px]">
    <button aria-label="Помощник"><svg class="size-[14px]" viewBox="0 0 16 16"><circle cx="8" cy="8" r="7.500" fill="#4c7fa8"/><path d="M8 8L1 5A7.500 7.500 0 0 1 14 3.500z" fill="#da4b36"/><path d="M8 8l7-3a7.500 7.500 0 0 1-4 10z" fill="#c48a3b"/><path d="M8 8l3 7a7.500 7.500 0 0 1-8-1.500z" fill="#7298ce"/><path d="M8 8L1 5a7.500 7.500 0 0 0 2 8.500z" fill="#3c8c49"/><path d="M8 4v8M4 8h8" stroke="#fff" stroke-width="1.800"/></svg></button>
    <button aria-label="Chrome"><svg class="size-[14px]" viewBox="0 0 16 16"><rect width="16" height="16" rx="3" fill="#f3f3f3"/><circle cx="8" cy="8" r="6" fill="#e0483a"/><path d="M8 8L2.800 5A6 6 0 0 0 8 14l2-4z" fill="#34a058"/><path d="M8 8l5.500-2.500A6 6 0 0 1 8 14z" fill="#f8c73a"/><circle cx="8" cy="8" r="3" fill="#fff"/><circle cx="8" cy="8" r="2.300" fill="#4583ea"/></svg></button>
    <button aria-label="Файлы"><svg class="size-[14px]" viewBox="0 0 16 16"><rect x=".5" y="1" width="15" height="14.500" rx="2" fill="#efbc63"/><path d="M.5 4.500V3a2 2 0 0 1 2-2H7l1.500 2h7v1.500z" fill="#c58e36"/><path d="M9 3h5v3H9z" fill="#f8dda4"/></svg></button>
    <button aria-label="LibreOffice"><svg class="size-[14px]" viewBox="0 0 16 16"><path d="M2 0h8l4 4v12H2z" fill="#fff"/><path d="M11 0h3v3z" fill="#aaa"/></svg></button>
  </div>
  <span class="flex-1"></span>
  <button class="flex items-center gap-[6px]">ru <svg class="size-2"><use href="#drop"/></svg></button>
  <div class="ml-[14px] flex h-full w-[38px] items-center justify-center gap-[8px] bg-[#1b1b1b]">
    <button aria-label="Громкость"><svg class="size-[11px]" viewBox="0 0 12 12"><path d="M1 4h2l3-3v10L3 8H1z" fill="#ccc"/><path d="M7.500 4q1.500 2 0 4M9 2.500q3 3.500 0 7" fill="none" stroke="#ccc"/></svg></button>
    <button aria-label="Уведомления"><svg class="size-[11px]" viewBox="0 0 12 12"><path d="M1.500 11V5.500a4.500 4.500 0 0 1 9 0V11H6.500V7H9M1.500 10.500H5" fill="none" stroke="#a11520" stroke-width="1.400"/></svg></button>
  </div>
  <time class="ml-[14px] whitespace-pre">Сб, 22 августа  20:00</time>
  <svg role="img" aria-label="Подсолнух" class="ml-[17px] size-5" viewBox="0 0 20 20"><g stroke="#f2c21b" stroke-width="3" stroke-linecap="round"><path d="M10 2v16M2 10h16M4.300 4.300l11.400 11.400M15.700 4.300L4.300 15.700M7 2.600l6 14.800M13 2.600L7 17.400M2.600 7l14.800 6M2.600 13l14.800-6"/></g><circle cx="10" cy="10" r="4.500" fill="#7a4310"/><circle cx="10" cy="10" r="2.300" fill="#4f2c10"/></svg>
  <svg class="ml-2 h-full w-[11px]" viewBox="0 0 11 25"><circle cx="10" cy="22" r="7" fill="none" stroke="#666"/><circle cx="10" cy="22" r="3.500" fill="none" stroke="#777"/></svg>
</div>

<script>
  // Ruler numbers every centimetre (52px), tab stops every 65px; zero is the left margin.
  const ns = 'http://www.w3.org/2000/svg', marks = document.getElementById('marks');
  for (let cm = -1; cm <= 18; cm++) {
    if (cm === 0) continue;
    const x = 104 + cm * 52, t = document.createElementNS(ns, 'text');
    t.setAttribute('x', x); t.setAttribute('y', 8); t.textContent = Math.abs(cm);
    marks.append(t);
  }
  for (let x = 169; x < 980; x += 65) {
    const p = document.createElementNS(ns, 'path');
    p.setAttribute('d', `M${x - 1.5} 12h3l-1.500 -2.500z`);
    marks.append(p);
  }
</script>
</body>
</html>
